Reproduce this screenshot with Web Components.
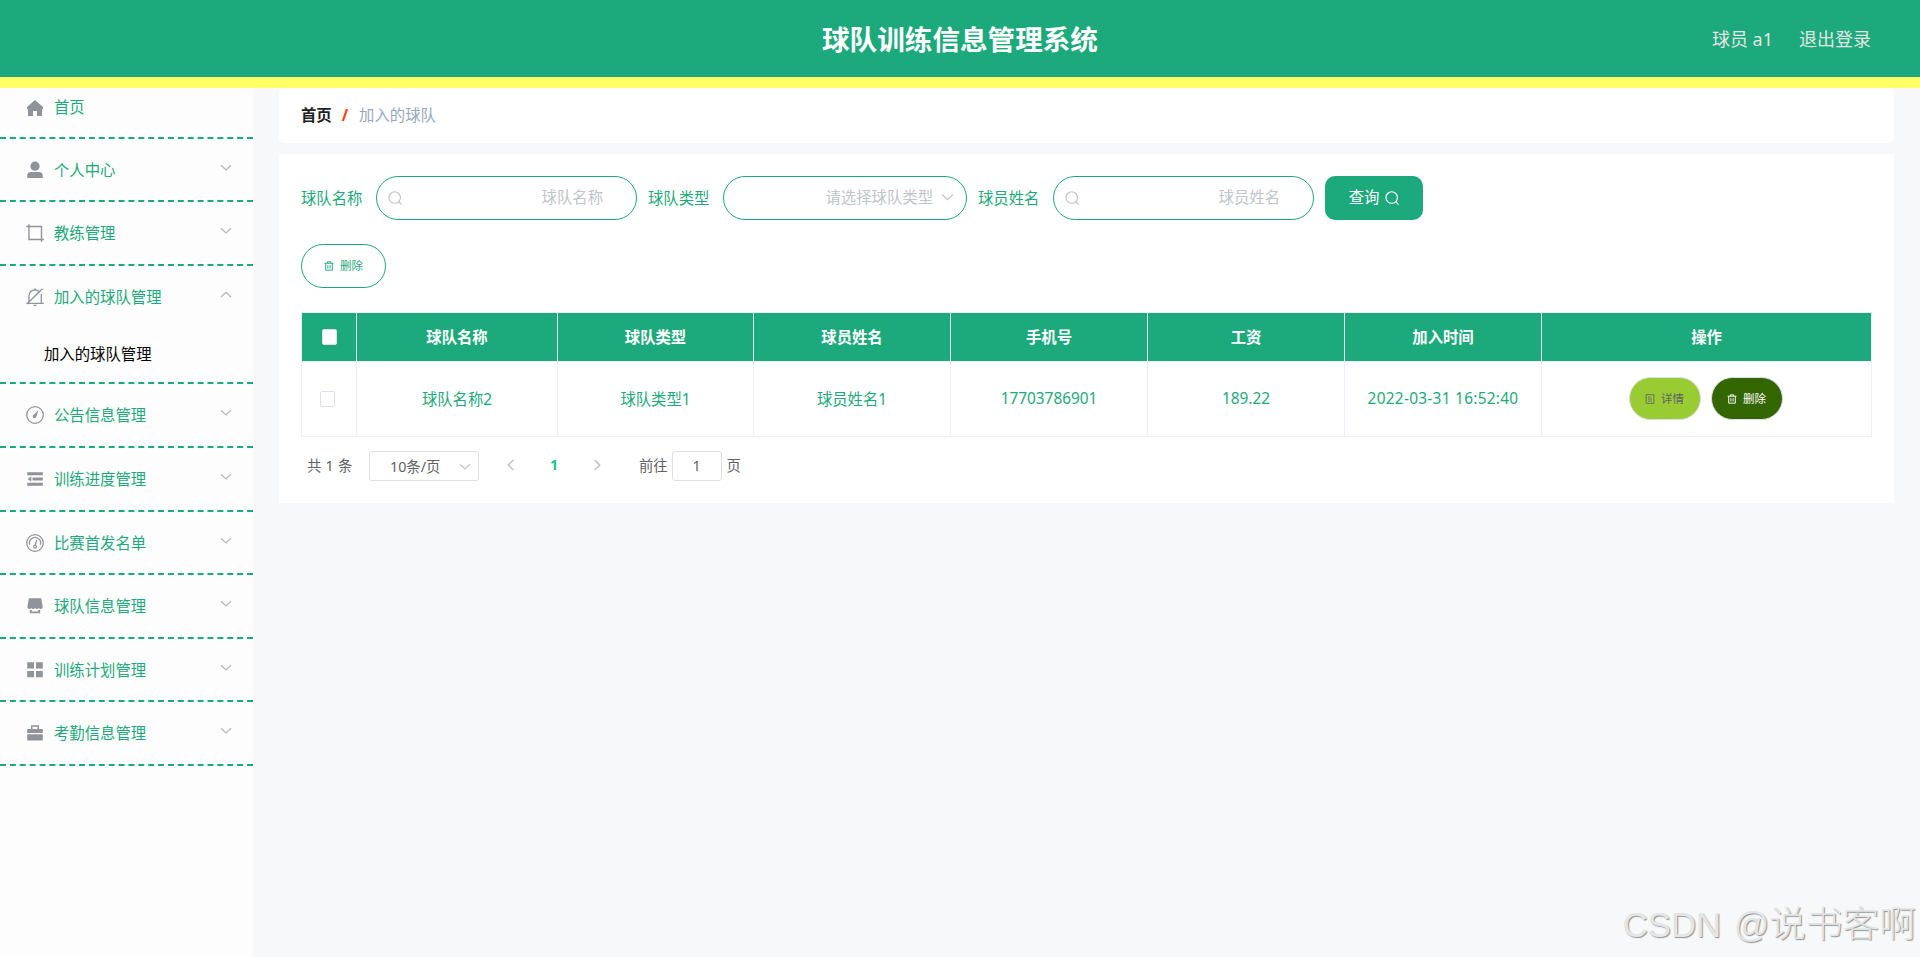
<!DOCTYPE html>
<html lang="zh-CN">
<head>
<meta charset="utf-8">
<title>球队训练信息管理系统</title>
<style>
html,body{margin:0;padding:0;height:100%}
body{font-family:"Noto Sans","Noto Sans CJK SC",sans-serif;font-size:15.36px;background:#f6f8fa;overflow:hidden;--green:#1ca97b}
</style>
</head>
<body>
<team-app></team-app>
<script>
const ICONS = {
  home:'<path fill="currentColor" d="M9 1 1 8v2h1v7h5v-5h4v5h5v-7h1V8z"/>',
  user:'<circle cx="9" cy="5.2" r="4.6" fill="currentColor"/><path fill="currentColor" d="M1.2 17v-2.2Q1.2 11 5 11h8q3.800 0 3.800 3.800V17z"/>',
  crop:'<path fill="none" stroke="currentColor" stroke-width="1.400" d="M.3 2.500h15.200v15.300M3 .3v15.200h14.900"/>',
  bell:'<path fill="none" stroke="currentColor" stroke-width="1.300" d="M.3 15.300H17.800M3 13.500V7.500Q3.600 2 9 2q2.500 0 4.100 1.500M15.300 6v9.300M16.500.8.8 16M9 .3V2M7.500 17.400h3"/>',
  odometer:'<circle cx="9" cy="9" r="8.300" fill="none" stroke="currentColor" stroke-width="1.300"/><path fill="currentColor" d="M12.500 4 7.200 9.200q-1.200 2 .4 3 1.800.6 2.600-1.200z"/>',
  fold:'<path fill="currentColor" d="M1.200 2.300h15.600v3H1.200zM6.500 7.600h10.300v2.800H6.500zM1.200 12.700h15.600v3H1.200zM1.500 9 5.300 6.500v5z"/>',
  gauge:'<circle cx="9" cy="9" r="8.300" fill="none" stroke="currentColor" stroke-width="1.300"/><path fill="none" stroke="currentColor" stroke-width="1.300" d="M3.600 10.800A5.700 5.700 0 1 1 14.400 10.800M10.800 6 9 11.500"/><circle cx="9" cy="12.800" r="1.400" fill="none" stroke="currentColor" stroke-width="1.200"/>',
  shop:'<path fill="currentColor" d="M2.800 1.200h12.400l1.500 8.300q.2 2.500-2 2.500-1.300 0-1.900-1-.6 1-1.800 1T9 11q-.6 1-1.800 1t-1.800-1q-.6 1-1.900 1-2.200 0-2-2.500zM3.800 13h2v1.500h6.400V13h2v3.300H3.800z"/>',
  grid:'<path fill="currentColor" d="M1.200 1.300h6.800v6.200H1.200zM10 1.300h6.800v6.200H10zM1.200 10h6.800v6.300H1.200zM10 10h6.800v6.300H10z"/>',
  bag:'<path fill="currentColor" d="M1.200 5H5V1.300h8V5h3.800v4H1.200zM6.500 2.800V5h5V2.800zM1.200 10.200h15.600v6.300H1.200z" fill-rule="evenodd"/>',
  down:'<path fill="none" stroke="currentColor" stroke-width="1.900" d="M1.500 5l7.500 7 7.500-7"/>',
  up:'<path fill="none" stroke="currentColor" stroke-width="1.900" d="M1.500 12l7.500-7 7.500 7"/>',
  left:'<path fill="none" stroke="currentColor" stroke-width="2.400" d="M12.500 1.500 5 9l7.500 7.500"/>',
  right:'<path fill="none" stroke="currentColor" stroke-width="2.400" d="M5.500 1.500 13 9l-7.500 7.500"/>',
  search:'<circle cx="8.600" cy="8.400" r="7.400" fill="none" stroke="currentColor" stroke-width="1.500"/><path fill="none" stroke="currentColor" stroke-width="1.500" d="m13.500 13.500 4 4"/>',
  trash:'<path fill="none" stroke="currentColor" stroke-width="1.700" d="M1 4h16M6 4V1.500h6V4M3 4v12.500h12V4M7 7.500v6M11 7.500v6"/>',
  doc:'<path fill="none" stroke="currentColor" stroke-width="1.500" d="M2 1.200h14v15.600h-14zM5.500 5.500h4M5.500 9h7M5.500 12.800h7"/>'
};
function element(name, css, html){
  customElements.define(name, class extends HTMLElement{
    constructor(){
      super();
      const t=document.createElement('template');
      t.innerHTML='<style>'+css+'</style>'+html;
      this.attachShadow({mode:'open'}).appendChild(t.content.cloneNode(true));
    }
  });
}
customElements.define('ui-icon', class extends HTMLElement{
  connectedCallback(){
    if(this.shadowRoot) return;
    const s=this.getAttribute('size')||18;
    this.attachShadow({mode:'open'}).innerHTML=
      `<style>:host{display:block;flex:none;width:${s}px;height:${s}px}svg{display:block}</style><svg width="${s}" height="${s}" viewBox="0 0 18 18">${ICONS[this.getAttribute('name')]}</svg>`;
  }
});
element('app-header',`
:host{display:grid;grid-template-columns:1fr auto 1fr;align-items:center;height:77px;border-bottom:11px solid #ff6;background:var(--green)}
h1{grid-column:2;margin:0;font-size:27.6px;line-height:40px;font-weight:700;color:#fff;padding-top:1px}
nav{display:flex;justify-content:flex-end;gap:26px;padding:0 49px 0 0;font-size:18px;line-height:28px;color:#e3e6e4}
`,`<h1>球队训练信息管理系统</h1><nav><span>球员 a1</span><span>退出登录</span></nav>`);

customElements.define('side-item', class extends HTMLElement{
  connectedCallback(){
    if(this.shadowRoot) return;
    const a=n=>this.getAttribute(n), arrow=a('arrow');
    this.attachShadow({mode:'open'}).innerHTML=`<style>
:host{display:block;box-sizing:border-box;height:${a('h')}px;border-bottom:2px dashed var(--green);color:var(--green)}
.row{display:flex;align-items:center;height:${a('row')||62}px;padding:0 21px 0 26px}
.label{margin-left:10px;flex:1;line-height:24px}
.label{margin-top:1px}
.main{color:#909399}.arrow{color:#b4b6ba;margin-top:-4px}
</style><div class="row"><ui-icon class="main" name="${a('icon')}"></ui-icon><span class="label">${a('label')}</span>${arrow?`<ui-icon class="arrow" size="12" name="${arrow}"></ui-icon>`:''}</div><slot></slot>`;
  }
});
element('side-menu',`
:host{display:block;width:253px;background:#fdfdfd}
.sub{color:#000;line-height:24px;padding:15px 0 0 44px}
`,`
<side-item h="51" row="39" icon="home" label="首页"></side-item>
<side-item h="63" icon="user" label="个人中心" arrow="down"></side-item>
<side-item h="64" icon="crop" label="教练管理" arrow="down"></side-item>
<side-item h="118" icon="bell" label="加入的球队管理" arrow="up"><div class="sub">加入的球队管理</div></side-item>
<side-item h="64" icon="odometer" label="公告信息管理" arrow="down"></side-item>
<side-item h="64" icon="fold" label="训练进度管理" arrow="down"></side-item>
<side-item h="63" icon="gauge" label="比赛首发名单" arrow="down"></side-item>
<side-item h="64" icon="shop" label="球队信息管理" arrow="down"></side-item>
<side-item h="63" icon="grid" label="训练计划管理" arrow="down"></side-item>
<side-item h="64" icon="bag" label="考勤信息管理" arrow="down"></side-item>`);

element('bread-crumb',`
:host{display:flex;align-items:center;height:55px;background:#fff;border-radius:5px;padding-left:22px;line-height:24px}
b{color:#222}i{color:#ff3c00;font-style:normal;font-weight:700;margin:0 11px 0 10px}span{color:#97a8be}
`,`<b>首页</b><i>/</i><span>加入的球队</span>`);

element('search-field',`
:host{display:flex;align-items:center;color:var(--green);line-height:24px}
label{width:75px;padding-top:1px;box-sizing:border-box}
.box{box-sizing:border-box;width:261px;height:44px;border:1px solid var(--green);border-radius:22px;display:flex;align-items:center;color:#c0c4cc;padding:0 33px 1px 11px}
.box span{flex:1;text-align:right}
:host([kind=select]) .box{width:244px;padding:0 12px 1px}
:host([kind=select]) .pre,:host(:not([kind=select])) .post{display:none}
.post{margin-left:8px}
`,`<label><slot name="label"></slot></label><div class="box"><ui-icon class="pre" name="search" size="14"></ui-icon><span><slot></slot></span><ui-icon class="post" name="down" size="13"></ui-icon></div>`);

element('pill-button',`
:host{display:flex;align-items:center;justify-content:center;gap:6px;box-sizing:border-box;width:72px;height:43px;border-radius:22px;font-size:11.5px;line-height:18px;border:1px solid #dcdfe6}
:host([kind=outline]){width:85px;height:44px;border-color:var(--green);color:var(--green)}
:host([kind=query]){width:98px;height:44px;border:0;border-radius:10px;background:var(--green);color:#fff;font-size:15.36px}
:host([kind=detail]){background:#9c3;color:#606266}
:host([kind=remove]){background:#360;color:#fff}
`,`<slot></slot>`);

element('check-box',`:host{display:block;box-sizing:border-box;width:15px;height:16px;background:#fff;border:1px solid #dcdfe6;border-radius:2px}`,'');

element('data-table',`
:host{display:block;border:1px solid #ebeef5;border-right:0;width:1570px;color:var(--green)}
.r{display:grid;grid-template-columns:55px 201px 196px 197px 197px 197px 197px 330px;height:75px}
.r>*{display:flex;align-items:center;justify-content:center;border-right:1px solid #ebeef5;border-bottom:1px solid #ebeef5;padding-bottom:2px}
.r:last-child{height:74px}.r:last-child>*{border-bottom:0}
.r.h{height:49px;background:var(--green);color:#fff;font-weight:700}
.r>.ops{gap:10px;padding:0 2px 1px 0}.r>.c1{padding-bottom:0}.r>.c2{padding:0 4px 0 0}
.date{letter-spacing:.3px}
`,`
<div class="r h"><div class="c1"><check-box></check-box></div><div>球队名称</div><div>球队类型</div><div>球员姓名</div><div>手机号</div><div>工资</div><div>加入时间</div><div>操作</div></div>
<div class="r"><div class="c2"><check-box></check-box></div><div>球队名称2</div><div>球队类型1</div><div>球员姓名1</div><div>17703786901</div><div>189.22</div><div class="date">2022-03-31 16:52:40</div>
<div class="ops"><pill-button kind="detail"><ui-icon name="doc" size="10"></ui-icon><span>详情</span></pill-button><pill-button kind="remove"><ui-icon name="trash" size="10"></ui-icon><span>删除</span></pill-button></div></div>`);

element('page-bar',`
:host{display:flex;align-items:center;height:30px;font-size:14.3px;line-height:22px;color:#606266;padding-left:6px}
.total{width:62px;word-spacing:.6px}
.size,.num{box-sizing:border-box;height:30px;border:1px solid #dcdfe6;border-radius:3px;display:flex;align-items:center}
.size{width:110px;padding:1px 7px 0 20px;justify-content:space-between}
.num{width:50px;justify-content:center;margin:0 5px 0 4px}
ui-icon{color:#c0c4cc}
.pager{display:flex;align-items:center;width:160px;box-sizing:border-box;padding:0 36px 2px 26px;justify-content:space-between}
b{color:#11c594}
`,`<span class="total">共 1 条</span><div class="size"><span>10条/页</span><ui-icon name="down" size="12"></ui-icon></div>
<div class="pager"><ui-icon name="left" size="12"></ui-icon><b>1</b><ui-icon name="right" size="12"></ui-icon></div><span>前往</span><div class="num">1</div><span>页</span>`);

element('list-panel',`
:host{display:block;box-sizing:border-box;height:349px;background:#fff;padding:22px 0 0 22px}
.search{display:flex;gap:11px}
.tools{margin:24px 0}
page-bar{margin-top:14px}
`,`
<div class="search">
<search-field><span slot="label">球队名称</span>球队名称</search-field>
<search-field kind="select"><span slot="label">球队类型</span>请选择球队类型</search-field>
<search-field><span slot="label">球员姓名</span>球员姓名</search-field>
<pill-button kind="query"><span>查询</span><ui-icon name="search" size="14"></ui-icon></pill-button>
</div>
<div class="tools"><pill-button kind="outline"><ui-icon name="trash" size="10"></ui-icon><span>删除</span></pill-button></div>
<data-table></data-table>
<page-bar></page-bar>`);

element('water-mark',`
:host{position:absolute;right:4px;bottom:5px;font-family:"Liberation Sans","Noto Sans CJK SC",sans-serif;font-size:36.7px;line-height:54px;font-weight:300;color:#e4e5e5;text-shadow:1px 1px 1px #929292;white-space:nowrap}
span{font-size:34.8px;word-spacing:3px}
`,'<span>CSDN @</span>说书客啊');

element('team-app',`
:host{display:flex;flex-direction:column;height:100vh}
.body{display:flex;flex:1;min-height:0}
main{flex:1;padding:0 26px;display:flex;flex-direction:column;gap:11px}
`,`<app-header></app-header><div class="body"><side-menu></side-menu><main><bread-crumb></bread-crumb><list-panel></list-panel></main></div><water-mark></water-mark>`);
</script>
</body>
</html>
